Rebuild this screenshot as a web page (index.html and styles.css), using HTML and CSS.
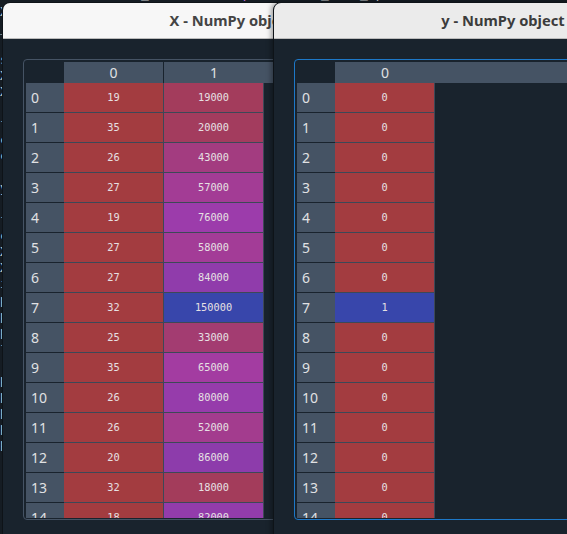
FILE: index.html
```html
<!DOCTYPE html>
<html>
<head>
<meta charset="utf-8">
<link rel="stylesheet" href="styles.css">
</head>
<body>
<div class="desktop">
  <div class="editor-top"><pre class="code"><span class="kw">from</span> sklearn.model_selection <span class="kw">import</span> train_test_split</pre></div>
  <div class="editor-side"><pre class="code">X
_
 
s
X
X
 
f
c
c
 
y
 
f
c
X
X
i
p
p
p
f
 
p
p
p
p
p
 
</pre></div>

  <section class="win win-x">
    <header class="titlebar">X - NumPy object</header>
    <div class="win-body">
      <div class="frame">
        <div class="grid grid-x">
          <div class="corner"></div>
          <div class="colhead">0</div>
          <div class="colhead last">1</div>
          <div class="colhead fill"></div>

          <div class="rowhead">0</div><div class="cell" style="--h:0">19</div><div class="cell" style="--h:344.05">19000</div><div class="blank"></div>
          <div class="rowhead">1</div><div class="cell" style="--h:0">35</div><div class="cell" style="--h:343.21">20000</div><div class="blank"></div>
          <div class="rowhead">2</div><div class="cell" style="--h:0">26</div><div class="cell" style="--h:323.89">43000</div><div class="blank"></div>
          <div class="rowhead">3</div><div class="cell" style="--h:0">27</div><div class="cell" style="--h:312.13">57000</div><div class="blank"></div>
          <div class="rowhead">4</div><div class="cell" style="--h:0">19</div><div class="cell" style="--h:296.17">76000</div><div class="blank"></div>
          <div class="rowhead">5</div><div class="cell" style="--h:0">27</div><div class="cell" style="--h:311.29">58000</div><div class="blank"></div>
          <div class="rowhead">6</div><div class="cell" style="--h:0">27</div><div class="cell" style="--h:289.45">84000</div><div class="blank"></div>
          <div class="rowhead">7</div><div class="cell" style="--h:0">32</div><div class="cell" style="--h:234">150000</div><div class="blank"></div>
          <div class="rowhead">8</div><div class="cell" style="--h:0">25</div><div class="cell" style="--h:332.29">33000</div><div class="blank"></div>
          <div class="rowhead">9</div><div class="cell" style="--h:0">35</div><div class="cell" style="--h:305.41">65000</div><div class="blank"></div>
          <div class="rowhead">10</div><div class="cell" style="--h:0">26</div><div class="cell" style="--h:292.81">80000</div><div class="blank"></div>
          <div class="rowhead">11</div><div class="cell" style="--h:0">26</div><div class="cell" style="--h:316.33">52000</div><div class="blank"></div>
          <div class="rowhead">12</div><div class="cell" style="--h:0">20</div><div class="cell" style="--h:287.77">86000</div><div class="blank"></div>
          <div class="rowhead">13</div><div class="cell" style="--h:0">32</div><div class="cell" style="--h:344.89">18000</div><div class="blank"></div>
          <div class="rowhead">14</div><div class="cell" style="--h:0">18</div><div class="cell" style="--h:291.13">82000</div><div class="blank"></div>
        </div>
      </div>
    </div>
  </section>

  <section class="win win-y">
    <header class="titlebar">y - NumPy object</header>
    <div class="win-body">
      <div class="frame focused">
        <div class="grid grid-y">
          <div class="corner"></div>
          <div class="colhead last">0</div>
          <div class="colhead fill"></div>

          <div class="rowhead">0</div><div class="cell" style="--h:0">0</div><div class="blank"></div>
          <div class="rowhead">1</div><div class="cell" style="--h:0">0</div><div class="blank"></div>
          <div class="rowhead">2</div><div class="cell" style="--h:0">0</div><div class="blank"></div>
          <div class="rowhead">3</div><div class="cell" style="--h:0">0</div><div class="blank"></div>
          <div class="rowhead">4</div><div class="cell" style="--h:0">0</div><div class="blank"></div>
          <div class="rowhead">5</div><div class="cell" style="--h:0">0</div><div class="blank"></div>
          <div class="rowhead">6</div><div class="cell" style="--h:0">0</div><div class="blank"></div>
          <div class="rowhead">7</div><div class="cell" style="--h:234">1</div><div class="blank"></div>
          <div class="rowhead">8</div><div class="cell" style="--h:0">0</div><div class="blank"></div>
          <div class="rowhead">9</div><div class="cell" style="--h:0">0</div><div class="blank"></div>
          <div class="rowhead">10</div><div class="cell" style="--h:0">0</div><div class="blank"></div>
          <div class="rowhead">11</div><div class="cell" style="--h:0">0</div><div class="blank"></div>
          <div class="rowhead">12</div><div class="cell" style="--h:0">0</div><div class="blank"></div>
          <div class="rowhead">13</div><div class="cell" style="--h:0">0</div><div class="blank"></div>
          <div class="rowhead">14</div><div class="cell" style="--h:0">0</div><div class="blank"></div>
        </div>
      </div>
    </div>
  </section>
</div>
</body>
</html>
```
FILE: styles.css
```css
* { box-sizing: border-box; }

html, body {
  margin: 0;
  padding: 0;
  background: #19232d;
}

.desktop {
  position: relative;
  width: 567px;
  height: 534px;
  overflow: hidden;
  background: #151c23;
}

.code {
  margin: 0;
  padding: 0;
  font: 13px/16px "DejaVu Sans Mono", monospace;
  color: #c8ccd0;
  white-space: pre;
}
.code .kw { color: #c670e0; }

.editor-top {
  height: 2px;
  overflow: hidden;
  display: flex;
  align-items: flex-end;
}
.editor-top .code { flex: none; }

.editor-side {
  width: 2px;
  overflow: hidden;
  padding-top: 2px;
}

.win {
  position: absolute;
  top: 2px;
  width: 460px;
  height: 560px;
  background: #19232d;
  border: 1px solid #0e1318;
  border-radius: 8px 8px 0 0;
  overflow: hidden;
  display: flex;
  flex-direction: column;
}
.win-x { left: 2px; }
.win-y {
  left: 273px;
  box-shadow: -2px 0 5px rgba(0, 0, 0, 0.35);
}

.titlebar {
  height: 36px;
  flex: none;
  border-bottom: 1px solid #bcbcbc;
  background: #f7f7f7;
  color: #444444;
  font: bold 14.7px/35px "Noto Sans", "DejaVu Sans", sans-serif;
  text-align: center;
  white-space: nowrap;
}
.win-y .titlebar {
  background: #ebebeb;
  color: #3c3c3c;
}

.win-body {
  flex: 1;
  padding: 20px 0 0 20px;
  background: #19232d;
}

.frame {
  width: 418px;
  height: 461px;
  border: 1px solid #455364;
  border-radius: 4px;
  padding: 2px 2px 1px 2px;
  overflow: hidden;
  background: #19232d;
}
.frame.focused {
  border-color: #1d78c8;
}

.grid {
  display: grid;
  grid-template-rows: 21px repeat(15, 30px);
  height: 100%;
  overflow: hidden;
}
.grid-x { grid-template-columns: 38px 100px 100px 1fr; }
.grid-y { grid-template-columns: 38px 100px 1fr; }

.corner {
  background: #19232d;
}

.colhead {
  background: #455364;
  border-right: 1px solid #19232d;
  color: #e0e1e3;
  font: 14px/21px "Noto Sans", "DejaVu Sans", sans-serif;
  text-align: center;
}
.colhead.last,
.colhead.fill { border-right: none; }

.rowhead {
  background: #455364;
  border-bottom: 1px solid #19232d;
  color: #e0e1e3;
  font: 14px/29px "Noto Sans", "DejaVu Sans", sans-serif;
  padding-left: 5px;
}

.cell {
  background: hsla(var(--h), 100%, 65%, 0.6);
  border-right: 1px solid #3d4857;
  border-bottom: 1px solid #3d4857;
  color: #e6e0e3;
  font: 10.3px/29px "DejaVu Sans Mono", monospace;
  text-align: center;
}

.blank {
  background: #19232d;
}
```
